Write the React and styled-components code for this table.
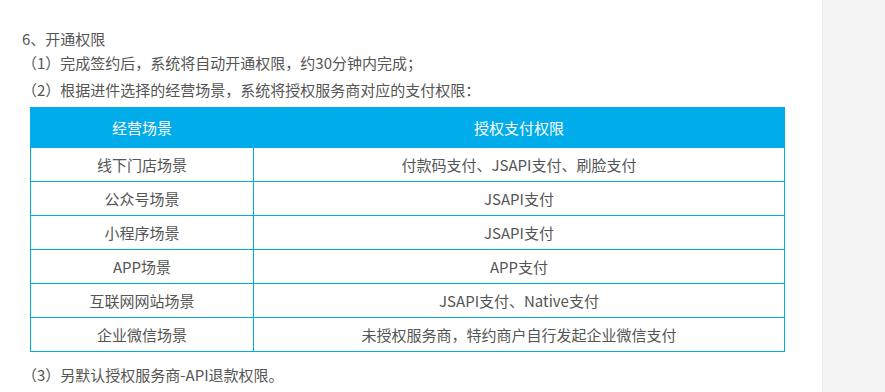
import React from "react";
import styled, { createGlobalStyle } from "styled-components";

const GlobalStyle = createGlobalStyle`
    html, body {
        margin: 0;
        padding: 0;
        background: #ffffff;
    }
    body {
        font-family: "Noto Sans CJK SC", "Noto Sans", sans-serif;
    }
`;

const rows = [
    ["线下门店场景", "付款码支付、JSAPI支付、刷脸支付"],
    ["公众号场景", "JSAPI支付"],
    ["小程序场景", "JSAPI支付"],
    ["APP场景", "APP支付"],
    ["互联网网站场景", "JSAPI支付、Native支付"],
    ["企业微信场景", "未授权服务商，特约商户自行发起企业微信支付"],
];

export default function App() {
    return (
        <Page>
            <GlobalStyle />
            <Content>
                <Title>6、开通权限</Title>
                <Item>（1）完成签约后，系统将自动开通权限，约30分钟内完成；</Item>
                <Item gap={3}>（2）根据进件选择的经营场景，系统将授权服务商对应的支付权限：</Item>

                <Table>
                    <thead>
                        <tr>
                            <Th first>经营场景</Th>
                            <Th>授权支付权限</Th>
                        </tr>
                    </thead>
                    <tbody>
                        {rows.map(([scene, perm]) => (
                            <tr key={scene}>
                                <Td>{scene}</Td>
                                <Td>{perm}</Td>
                            </tr>
                        ))}
                    </tbody>
                </Table>

                <Item gap={11}>（3）另默认授权服务商-API退款权限。</Item>
            </Content>
            <Side />
        </Page>
    );
}

const Page = styled.div`
    display: flex;
    width: 885px;
    height: 392px;
    overflow: hidden;
`;

const Content = styled.div`
    width: 822px;
    box-sizing: border-box;
    padding: 27px 0 0 22px;
    color: #555555;
    font-size: 15px;
`;

const Side = styled.div`
    flex: 1;
    background: #f4f4f4;
    border-left: 1px solid #e8e8e8;
`;

const Title = styled.div`
    line-height: 24px;
    height: 24px;
`;

const Item = styled.div`
    line-height: 24px;
    height: 24px;
    margin-top: ${(p) => (p.gap || 0)}px;
`;

const Table = styled.table`
    margin: 5px 0 0 8px;
    width: 755px;
    border-collapse: collapse;
    font-size: 15px;
`;

const Th = styled.th`
    height: 39px;
    padding: 0;
    background: #00acea;
    color: #ffffff;
    font-weight: normal;
    border: 1px solid #00acea;
    width: ${(p) => (p.first ? "222px" : "auto")};
    text-align: center;
`;

const Td = styled.td`
    height: 33px;
    padding: 0;
    border: 1px solid #00acea;
    text-align: center;
    color: #555555;
`;
